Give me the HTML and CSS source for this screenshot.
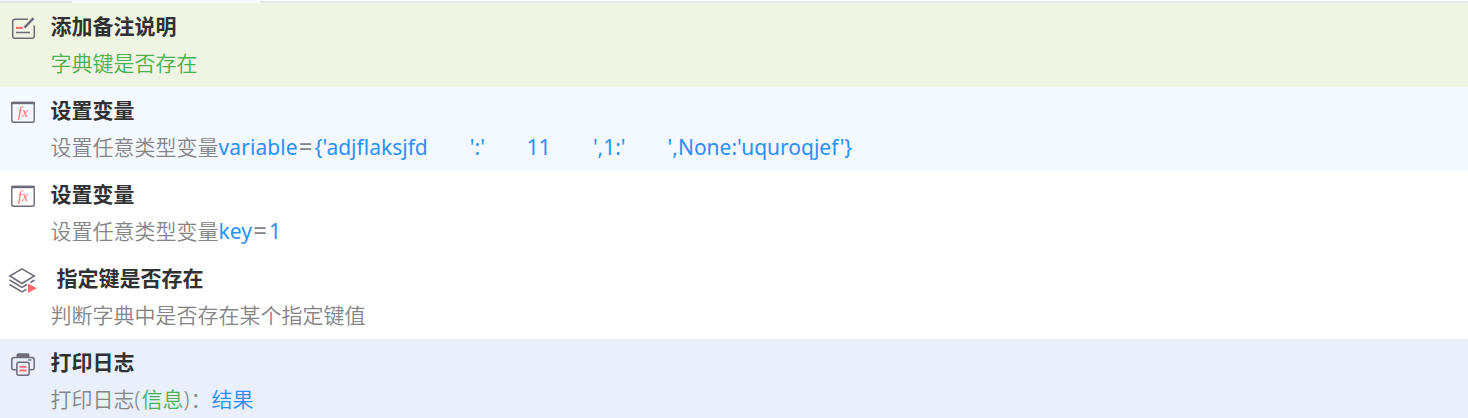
FILE: index.html
```
<!DOCTYPE html>
<html lang="zh-CN">
<head>
<meta charset="utf-8">
<title>流程</title>
<link rel="stylesheet" href="styles.css">
</head>
<body>
<div class="tabs"><div class="tab-prev"></div><div class="tab-active"></div><div class="tab-rest"></div></div>
<main class="steps">
  <section class="step note">
    <svg class="icon" width="30" height="30" viewBox="0 0 30 30" fill="none" stroke="#6e6b78" stroke-width="1.500"><path d="M20 7.300H7Q4.700 7.300 4.700 9.600V24Q4.700 26.300 7 26.300H24Q26.300 26.300 26.300 24V13.500"/><path d="M16.500 15.700 25.500 6.200" stroke-width="2.400"/><path d="M8 20.500H22"/><path d="M8 15.900H15" stroke="#ff6b6b" stroke-width="2"/></svg>
    <div class="body"><h2 class="title">添加备注说明</h2><p class="desc"><span class="green">字典键是否存在</span></p></div>
  </section>
  <section class="step hover">
    <svg class="icon" width="30" height="30" viewBox="0 0 30 30" fill="none"><rect x="3.800" y="6.500" width="22.400" height="19.700" rx="1.500" stroke="#6e6b78" stroke-width="1.400"/><path d="M3.200 7H26.800" stroke="#6e6b78" stroke-width="2.400"/><text class="fx" x="10" y="21">fx</text></svg>
    <div class="body"><h2 class="title">设置变量</h2><p class="desc">设置任意类型变量<span class="blue name">variable</span><span class="eq">=</span><span class="blue value">{'adjflaksjfd&emsp;&emsp;':'&emsp;&emsp;11&emsp;&emsp;',1:'&emsp;&emsp;',None:'uquroqjef'}</span></p></div>
  </section>
  <section class="step">
    <svg class="icon" width="30" height="30" viewBox="0 0 30 30" fill="none"><rect x="3.800" y="6.500" width="22.400" height="19.700" rx="1.500" stroke="#6e6b78" stroke-width="1.400"/><path d="M3.200 7H26.800" stroke="#6e6b78" stroke-width="2.400"/><text class="fx" x="10" y="21">fx</text></svg>
    <div class="body"><h2 class="title">设置变量</h2><p class="desc">设置任意类型变量<span class="blue name">key</span><span class="eq">=</span><span class="blue value">1</span></p></div>
  </section>
  <section class="step">
    <svg class="icon" width="30" height="30" viewBox="0 0 30 30" fill="none" stroke="#6e6b78" stroke-width="1.500"><path d="M14 4.800 26.300 12 14 19.500 1.800 12Z"/><path d="M1.500 16 14 23.500 19 20.500M22.500 18.500 26.500 16"/><path d="M1.500 20.500 14 28 18.500 25.300"/><path d="M20 19.500 28.800 24.300 20 29Z" fill="#ff6b6b" stroke="none"/></svg>
    <div class="body"><h2 class="title indent">指定键是否存在</h2><p class="desc">判断字典中是否存在某个指定键值</p></div>
  </section>
  <section class="step selected">
    <svg class="icon" width="30" height="30" viewBox="0 0 30 30" fill="none" stroke="#6e6b78" stroke-width="1.500"><path d="M8.500 9.500V7Q8.500 5.300 10.200 5.300H19.800Q21.500 5.300 21.500 7V9.500Z" fill="#6e6b78" stroke="none"/><path d="M9 21.700H5.500Q3.800 21.700 3.800 20V11.700Q3.800 9.400 6 9.400H24Q26.200 9.400 26.200 11.700V20Q26.200 21.700 24.500 21.700H21"/><path d="M20 12H23.500" stroke-width="1.300"/><rect x="8.900" y="14.200" width="12.200" height="13" rx="2"/><path d="M11.500 18.800H18.500M11.500 22.500H18.500" stroke="#ff6b6b" stroke-width="1.800"/></svg>
    <div class="body"><h2 class="title">打印日志</h2><p class="desc">打印日志<span class="paren">(</span><span class="green">信息</span><span class="paren">)</span>：<span class="blue">结果</span></p></div>
  </section>
</main>
</body>
</html>
```
FILE: styles.css
```
* { box-sizing: border-box; }
body { margin: 0; background: #fff; overflow: hidden; font-family: "Noto Sans CJK SC", sans-serif; }
.tabs { display: flex; height: 3px; }
.tab-prev { width: 72px; background: #e6e6e6; border-top: 1px solid #f5f5f5; }
.tab-active { width: 188px; background: #fafafa; }
.tab-rest { flex: 1; background: #e6e6e6; border-top: 1px solid #fff; border-left: 2px solid #e6e6e6; }
.step { display: flex; height: 84px; padding-left: 8px; }
.note { background: #f0f4e2; }
.hover { background: #f4f8ff; }
.selected { background: #e9f0fc; }
.icon { flex: none; margin-top: 9px; }
.body { padding: 4px 0 0 12.500px; white-space: pre; }
.title { margin: 0 0 1px; font-size: 21px; line-height: 36px; font-weight: 700; color: #303133; }
.indent { padding-left: 6px; }
.desc { margin: 0; font-size: 21px; line-height: 36px; font-weight: 350; color: #858585; }
.green { color: #4caf50; }
.blue { color: #2a8ffb; }
.name, .value, .eq, .paren { font-family: "Noto Sans", "Noto Sans CJK SC", sans-serif; font-weight: 400; line-height: 1; }
.name { letter-spacing: 0.100px; }
.eq { font-size: 24px; padding: 0 2px 0 1px; }
.paren { font-weight: 300; letter-spacing: 1.200px; }
.fx { font: italic 14px "Liberation Serif", serif; fill: #ff6b6b; }
```
